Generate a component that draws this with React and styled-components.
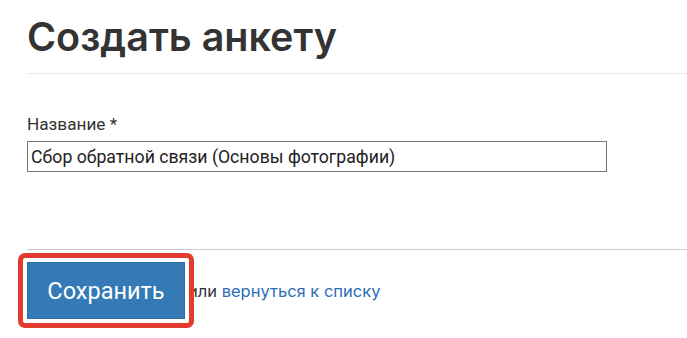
import React from "react";
import styled, { createGlobalStyle } from "styled-components";

const Global = createGlobalStyle`
  html, body { margin: 0; padding: 0; background: #fff; }
  body { font-family: Roboto, "Liberation Sans", sans-serif; color: #333; }
  * { box-sizing: border-box; }
`;

const Page = styled.div`
  padding-left: 27px;
  width: 687px;
  min-height: 338px;
`;

const Header = styled.header`
  height: 74px;
  border-bottom: 1px solid #e8e8e8;
  display: flex;
  align-items: flex-start;
`;

const Title = styled.h1`
  margin: 13px 0 0 0;
  font-family: Inter, "Noto Sans", sans-serif;
  font-weight: 600;
  font-size: 39.5px;
  line-height: 48px;
  letter-spacing: 0;
  color: #333;
`;

const Form = styled.div`
  height: 175px;
  padding-top: 40px;
  display: flex;
  flex-direction: column;
`;

const Field = styled.div`
  display: flex;
  flex-direction: column;
  gap: 7px;
`;

const Label = styled.label`
  font-family: Roboto, sans-serif;
  font-size: 17.2px;
  line-height: 20px;
  color: #333;
`;

const Input = styled.input`
  width: 580px;
  height: 31px;
  border: 1px solid #767676;
  border-radius: 0;
  padding: 0 3px;
  font-family: Roboto, sans-serif;
  font-size: 17.7px;
  color: #222;
  background: #fff;
  outline: none;
`;

const Actions = styled.div`
  border-top: 1px solid #cdcdcd;
  padding: 12px 0 19px;
  display: flex;
  align-items: center;
  font-family: Inter, "Noto Sans", sans-serif;
  font-size: 16.5px;
  color: #333;
`;

const SaveButton = styled.button`
  position: relative;
  z-index: 1;
  width: 158px;
  height: 57px;
  border: 1px solid #2e6da4;
  background: #337ab7;
  color: #fff;
  font-family: Roboto, sans-serif;
  font-size: 23.5px;
  padding: 0;
  border-radius: 0;
  margin-right: 3px;
  outline: none;
  cursor: pointer;

  &::after {
    content: "";
    position: absolute;
    inset: -10px;
    border: 5px solid #e23c31;
    border-radius: 7px;
    pointer-events: none;
  }
`;

const OrText = styled.span`
  color: #333;
  white-space: pre;
`;

const BackLink = styled.a`
  color: #2a6db5;
  text-decoration: none;
`;

export default function App() {
  return (
    <>
      <Global />
      <Page>
        <Header>
          <Title>Создать анкету</Title>
        </Header>
        <Form>
          <Field>
            <Label>Название *</Label>
            <Input defaultValue="Сбор обратной связи (Основы фотографии)" />
          </Field>
        </Form>
        <Actions>
          <SaveButton>Сохранить</SaveButton>
          <OrText>или </OrText>
          <BackLink href="#">вернуться к списку</BackLink>
        </Actions>
      </Page>
    </>
  );
}
